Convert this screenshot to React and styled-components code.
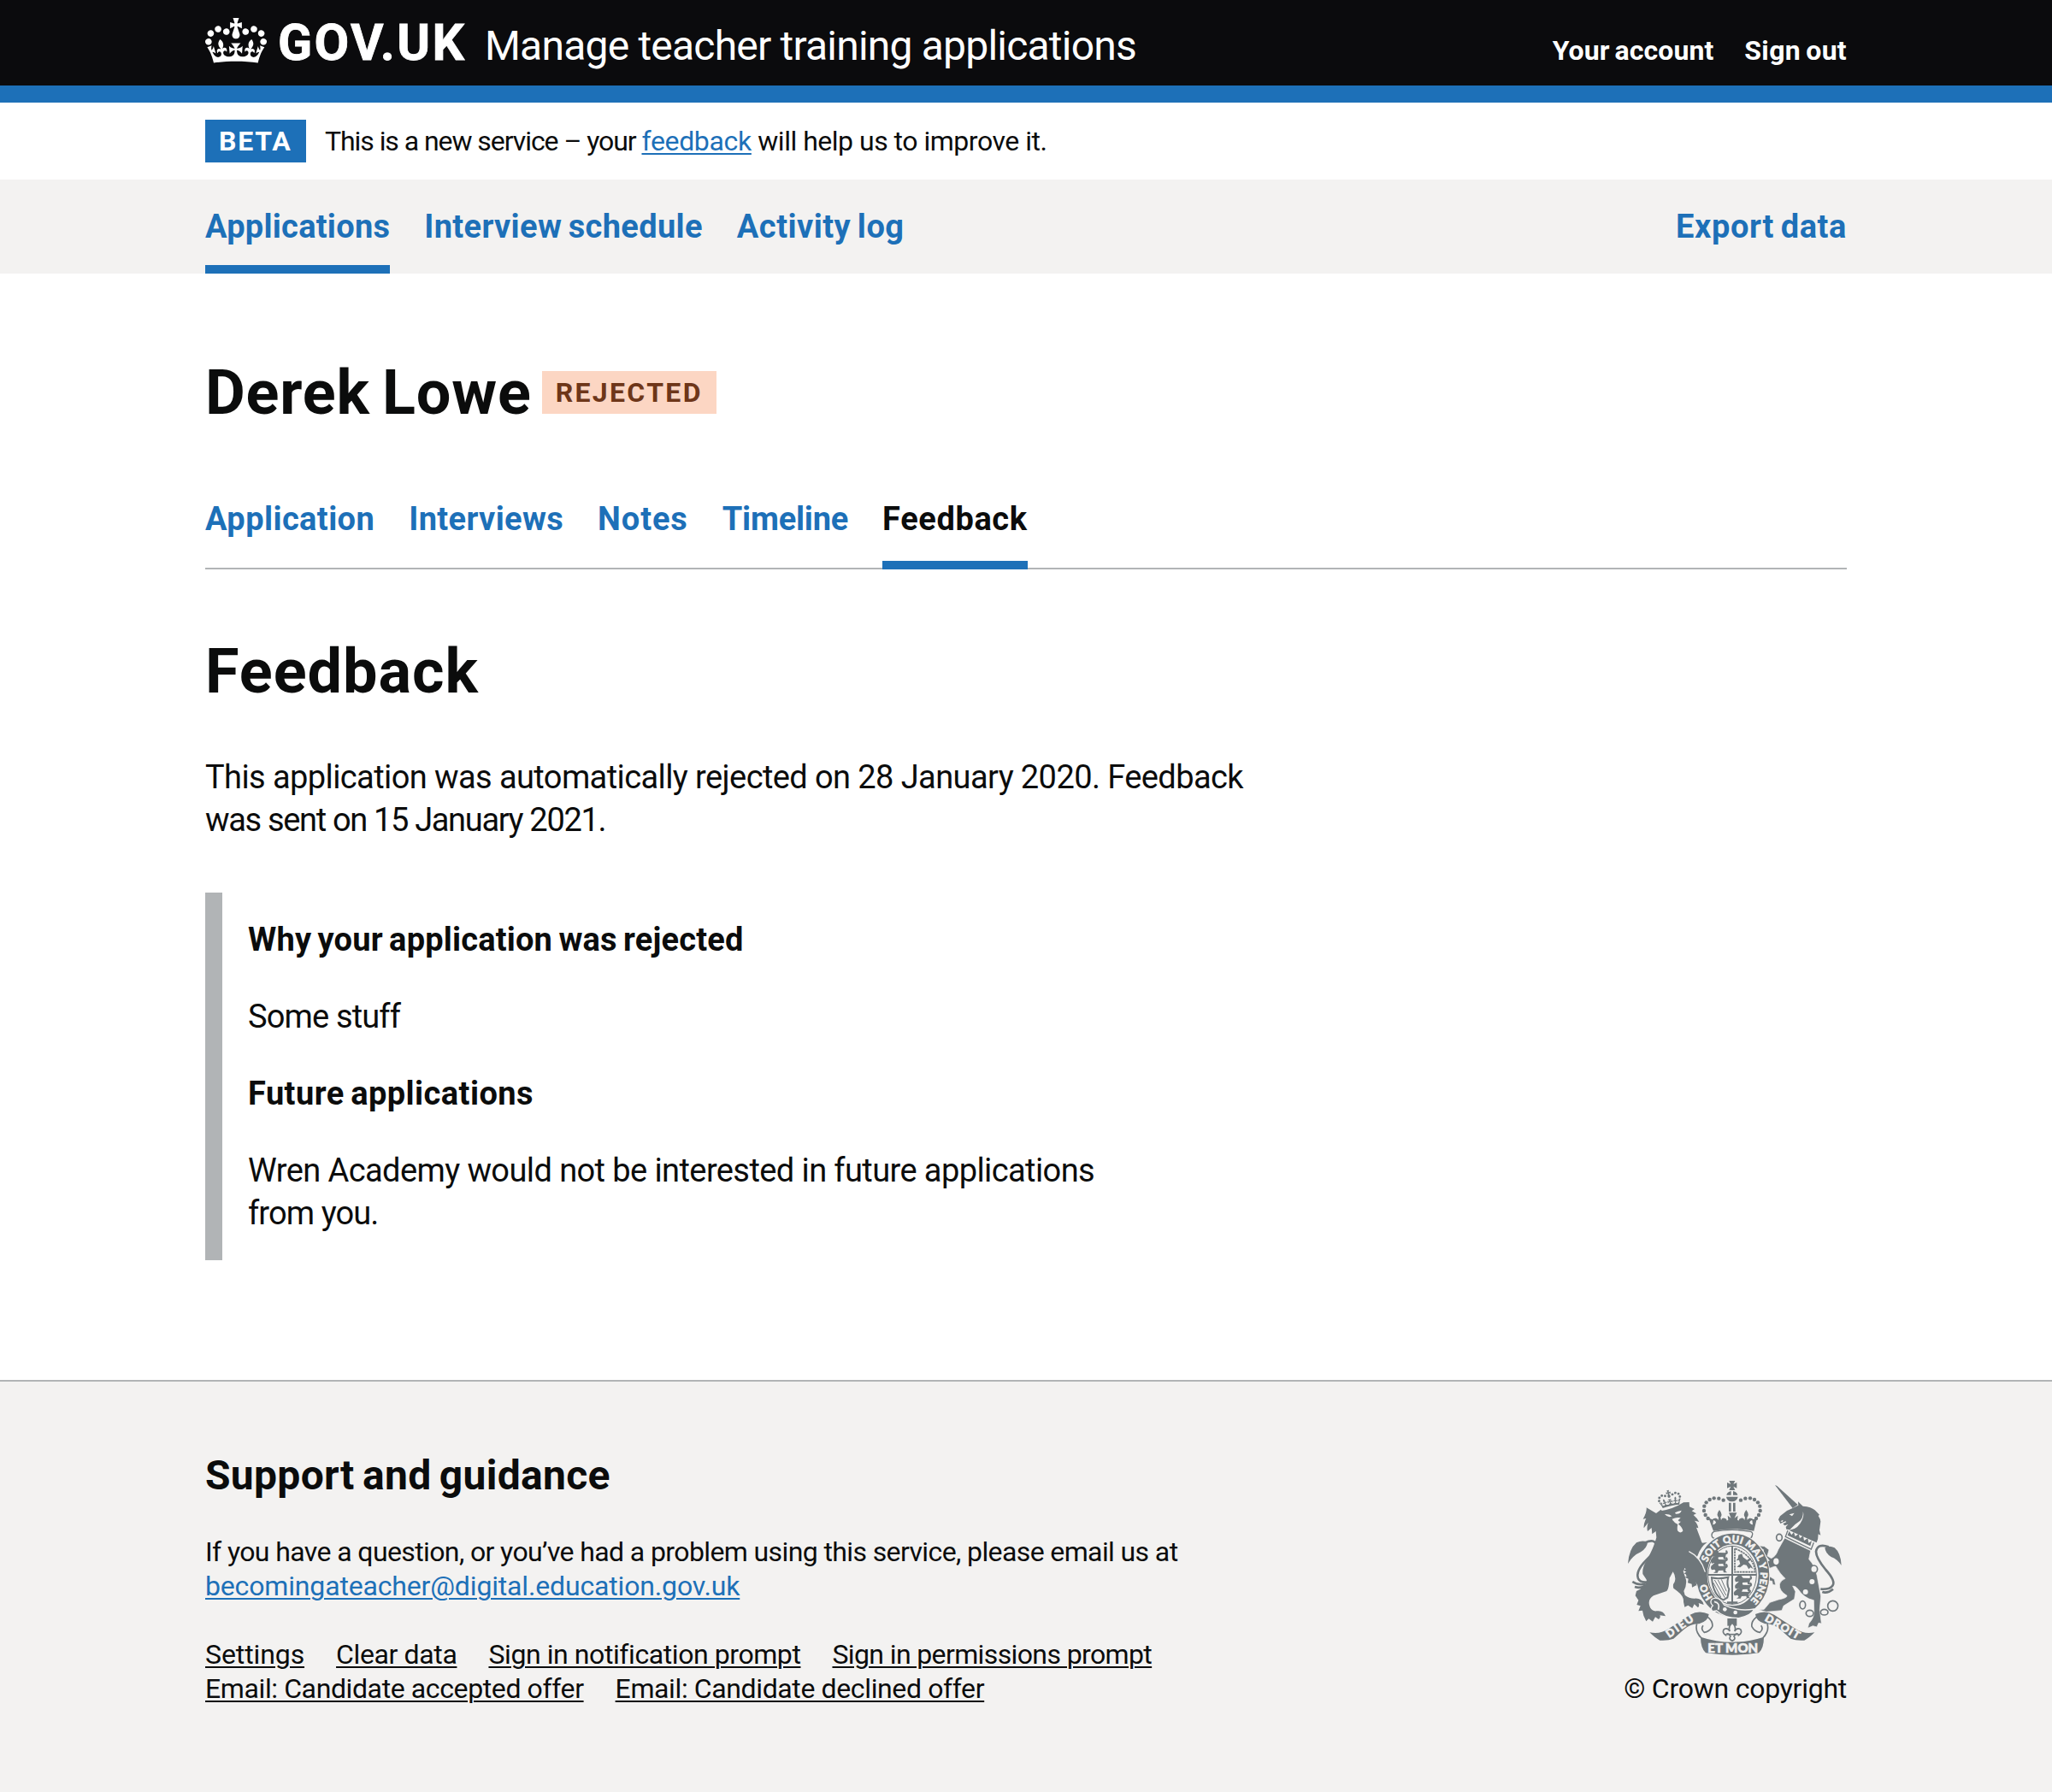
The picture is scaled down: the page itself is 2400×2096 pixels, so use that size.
import React from "react";
import styled, { createGlobalStyle, css } from "styled-components";

const ink = "#0b0c0c";
const brand = "#1d70b8";
const paper = "#f3f2f1";
const line = "#b1b4b6";
const heraldry = "#6f777b";

const GlobalStyle = createGlobalStyle`
  * { box-sizing: border-box; }
  body {
    margin: 0;
    background: #fff;
    color: ${ink};
    font-family: Roboto, "Liberation Sans", Arial, sans-serif;
  }
  h1, h2, p, ul { margin: 0; padding: 0; list-style: none; }
`;

const tracked = css`
  letter-spacing: ${(p) => p.$ls || 0}px;
`;
const bold = css`
  font-weight: 700;
  word-spacing: -0.06em;
`;

const Container = styled.div`
  width: 1920px;
  margin: 0 auto;
  display: flex;
`;

/* Header */
const Header = styled.header`
  height: 120px;
  background: #0b0b0d;
  border-bottom: 20px solid ${brand};
  color: #fff;
`;
const Logo = styled.a`
  display: flex;
  align-items: flex-start;
  width: 327px;
`;
const Crown = styled.svg`
  display: block;
  width: 72px;
  height: 53px;
  margin: 21px 13px 0 0;
`;
const LogoText = styled.span`
  margin-top: 19px;
  font-size: 59px;
  line-height: 61px;
  -webkit-text-stroke: 0.8px #fff;
  ${bold}
  ${tracked}
`;
const Product = styled.span`
  margin-top: 23px;
  font-size: 48px;
  line-height: 61px;
  white-space: nowrap;
  ${tracked}
`;
const AccountNav = styled.nav`
  display: flex;
  gap: 36px;
  margin: 39px 0 0 auto;
`;
const AccountLink = styled.a`
  font-size: 32px;
  line-height: 40px;
  ${bold}
  ${tracked}
`;

/* Phase banner */
const Phase = styled.div`
  padding: 20px 0;
`;
const Tag = styled.strong`
  display: block;
  height: 50px;
  width: ${(p) => p.$w}px;
  padding-left: 16px;
  font-size: 32px;
  line-height: 50px;
  text-transform: uppercase;
  color: ${(p) => p.$fg};
  background: ${(p) => p.$bg};
  ${bold}
  ${tracked}
`;
const PhaseText = styled.p`
  margin-left: 22px;
  font-size: 32px;
  line-height: 50px;
  white-space: pre;
`;
const Span = styled.span`
  ${tracked}
`;
const Link = styled.a`
  color: ${(p) => (p.$plain ? ink : brand)};
  text-decoration: underline;
  text-decoration-thickness: 2px;
  text-underline-offset: 3px;
  ${tracked}
`;

/* Primary navigation */
const Primary = styled.nav`
  height: 110px;
  background: ${paper};
`;
const NavItem = styled.a`
  height: 110px;
  padding-top: 30px;
  margin-right: ${(p) => (p.$end ? 0 : 40)}px;
  margin-left: ${(p) => (p.$end ? "auto" : 0)};
  border-bottom: 10px solid ${(p) => (p.$on ? brand : "transparent")};
  color: ${brand};
  font-size: 38px;
  line-height: 50px;
  ${bold}
  ${tracked}
`;

/* Main */
const Main = styled.main`
  width: 1920px;
  margin: 0 auto;
  padding: 99px 0 140px;
`;
const TitleRow = styled.div`
  display: flex;
  align-items: flex-start;
  gap: 12px;
  ${Tag} {
    margin-top: 15px;
  }
`;
const Title = styled.h1`
  font-size: 72px;
  line-height: 81px;
  ${bold}
  ${tracked}
`;
const Tabs = styled.nav`
  display: flex;
  gap: 40px;
  margin-top: 82px;
  box-shadow: inset 0 -2px 0 ${line};
`;
const Tab = styled.a`
  padding-bottom: 24px;
  border-bottom: 10px solid ${(p) => (p.$on ? brand : "transparent")};
  color: ${(p) => (p.$on ? ink : brand)};
  font-size: 38px;
  line-height: 50px;
  ${bold}
  ${tracked}
`;
const SectionTitle = styled(Title).attrs({ as: "h2" })`
  margin: 79px 0 58px;
`;
const Body = styled.p`
  font-size: 38px;
  line-height: 50px;
  ${(p) => p.$strong && bold}
  ${tracked}
`;
const Row = styled.span`
  display: block;
  white-space: nowrap;
  ${tracked}
`;
const Inset = styled.div`
  display: flex;
  flex-direction: column;
  gap: 40px;
  margin-top: 60px;
  padding: 30px;
  border-left: 20px solid ${line};
`;

/* Footer */
const Footer = styled.footer`
  border-top: 2px solid ${line};
  background: ${paper};
  padding: 79px 0 101px;
  ${Container} {
    justify-content: space-between;
    align-items: flex-end;
  }
`;
const FooterTitle = styled.h2`
  font-size: 48px;
  line-height: 61px;
  ${bold}
  ${tracked}
`;
const FooterText = styled.p`
  margin: 39px 0 40px;
  font-size: 32px;
  line-height: 40px;
`;
const FooterLinks = styled.ul`
  display: flex;
  gap: 37px;
  font-size: 32px;
  line-height: 40px;
`;
const Copyright = styled.div`
  font-size: 32px;
  line-height: 40px;
  text-align: right;
  ${tracked}
`;
const Crest = styled.svg`
  display: block;
  width: 260px;
  height: 210px;
  margin: 0 0 15px auto;
`;

const crownPath =
  "M25 30.2c3.5 1.5 7.7-.2 9.1-3.7 1.5-3.6-.2-7.8-3.9-9.2-3.6-1.4-7.6.3-9.1 3.9-1.4 3.5.3 7.5 3.9 9zM9 39.5c3.6 1.5 7.8-.2 9.2-3.7 1.5-3.6-.2-7.8-3.9-9.1-3.6-1.5-7.6.2-9.1 3.8-1.4 3.5.3 7.5 3.8 9zM4.4 57.2c3.5 1.5 7.7-.2 9.1-3.8 1.5-3.6-.2-7.7-3.9-9.1-3.5-1.5-7.6.3-9.1 3.8-1.4 3.5.3 7.6 3.9 9.1zm38.3-21.4c3.5 1.5 7.7-.2 9.1-3.8 1.5-3.6-.2-7.7-3.9-9.1-3.6-1.5-7.6.3-9.1 3.8-1.3 3.6.4 7.7 3.9 9.1zm64.4-5.6c-3.6 1.5-7.8-.2-9.1-3.7-1.5-3.6.2-7.8 3.8-9.2 3.6-1.4 7.7.3 9.2 3.9 1.3 3.5-.4 7.5-3.9 9zm15.9 9.3c-3.6 1.5-7.7-.2-9.1-3.7-1.5-3.6.2-7.8 3.7-9.1 3.6-1.5 7.7.2 9.2 3.8 1.5 3.5-.3 7.5-3.8 9zm4.7 17.7c-3.6 1.5-7.8-.2-9.2-3.8-1.5-3.6.2-7.7 3.9-9.1 3.6-1.5 7.7.3 9.2 3.8 1.3 3.5-.4 7.6-3.9 9.1zM89.3 35.8c-3.6 1.5-7.8-.2-9.2-3.8-1.4-3.6.2-7.7 3.9-9.1 3.6-1.5 7.7.3 9.2 3.8 1.4 3.6-.3 7.7-3.9 9.1zM69.7 17.7l8.9 4.7V9.3l-8.9 2.8c-.2-.3-.5-.6-.9-.9L72.4 0H59.6l3.5 11.2c-.3.3-.6.5-.9.9l-8.8-2.8v13.1l8.8-4.7c.3.3.6.7.9.9l-5 15.4v.1c-.2.8-.4 1.6-.4 2.4 0 4.1 3.1 7.5 7 8.1h.2c.3 0 .7.1 1 .1.4 0 .7 0 1-.1h.2c4-.6 7.1-4.1 7.1-8.1 0-.8-.1-1.7-.4-2.4V34l-5.1-15.4c.4-.2.7-.6 1-.9zM66 92.8c16.9 0 32.8 1.1 47.1 3.2 4-16.9 8.9-26.7 14-33.5l-9.6-3.4c1 4.9 1.1 7.2 0 10.2-1.5-1.4-3-4.3-4.2-8.7L108.6 76c2.8-2 5-3.2 7.5-3.3-4.4 9.4-10 11.9-13.6 11.2-4.3-.8-6.3-4.6-5.6-7.9 1-4.7 5.7-5.9 8-.5 4.3-8.7-3-11.4-7.6-8.8 7.1-7.2 7.9-13.5 2.1-21.1-8 6.1-8.1 12.3-4.5 20.8-4.7-5.4-12.1-2.5-9.5 6.2 3.4-5.2 7.9-2 7.2 3.1-.6 4.3-6.4 7.8-13.5 7.2-10.3-.9-10.9-8-11.2-13.8 2.5-.5 7.1 1.8 11 7.3L80.2 60c-4.1 4.4-8 5.3-12.3 5.4 1.4-4.4 8-11.6 8-11.6H55.5s6.4 7.2 7.9 11.6c-4.2-.1-8-1-12.3-5.4l1.4 16.4c3.9-5.5 8.5-7.7 10.9-7.3-.3 5.8-.9 12.8-11.1 13.8-7.2.6-12.9-2.9-13.5-7.2-.7-5 3.8-8.3 7.1-3.1 2.7-8.7-4.6-11.6-9.4-6.2 3.7-8.5 3.6-14.7-4.6-20.8-5.8 7.6-5 13.9 2.2 21.1-4.7-2.6-11.9.1-7.7 8.8 2.3-5.5 7.1-4.2 8.1.5.7 3.3-1.3 7.1-5.7 7.9-3.5.7-9-1.8-13.5-11.2 2.5.1 4.7 1.3 7.5 3.3l-4.7-15.4c-1.2 4.4-2.7 7.2-4.3 8.7-1.1-3-.9-5.3 0-10.2l-9.5 3.4c5 6.9 9.9 16.7 14 33.5 14.8-2.1 30.8-3.2 47.7-3.2z";

const pearls = [
  [377, 134], [361, 128], [344, 127], [329, 132], [317, 142], [310, 155], [309, 171], [314, 186], [323, 198],
];

const Passant = ({ y, x = 0 }) => (
  <path
    d="M334 314q-4 8 2 14l10-2 4 6-8 6h14l4-8 16-1 2 8h12l-6-6 2-10q8-2 6-10t-8-4q4 6-1 8l-22-1-6-8-8-4z"
    transform={`translate(${x} ${y})`}
  />
);

function RoyalArms() {
  return (
    <Crest viewBox="30 60 780 630" fill={heraldry} aria-hidden="true">
      <defs>
        <path id="garter" d="M410 512A97 115 0 0 1 410 282A97 115 0 0 1 410 512" />
      </defs>

      {/* crown above the shield */}
      <path d="M397 66h21l-6 12 12-6v20l-12-6 6 13h-21l6-13-13 6V72l13 6zM404 102v14h-16q2-10 16-14zM411 102q14 4 16 14h-16zM387 122h41q-3 16-21 17-18-1-20-17z" />
      <path d="M396 143h8v31h-8zM411 143h8v31h-8z" />
      {pearls.map(([x, y]) => (
        <g key={x}>
          <circle cx={x} cy={y} r="6.6" />
          <circle cx={815 - x} cy={y} r="6.6" />
        </g>
      ))}
      <path d="M325 196l17 8-2 16q10-1 11-9-6-10-14-6 2-9 14-8 7 2 8 7l1-10q-10-9 3-26 13 17 4 26l2 10q3-9 12-7 9 2 8 9l5-3-2-15 12 9-8-19h28l-8 19 12-9-2 15 5 3q-1-7 8-9 9-2 12 7l2-10q-9-9 4-26 13 17 3 26l1 10q1-5 8-7 12-1 14 8-8-4-14 6 1 8 11 9l-2-16 17-8-11 46q-66-13-142 0z" />
      <path d="M344 244q63-12 128 0 10 3 6 14-2 10-12 12H350q-13-2-14-13 0-9 8-13z" fill={paper} stroke={heraldry} strokeWidth="4" />

      {/* lion */}
      <g transform="translate(141 108) rotate(-12) scale(.63 .6)">
        <path d={crownPath} />
      </g>
      <path d="M141 180l17-13 3 4q40-6 76-29l20-1 1 16 18 8-10 7 16 9-10 5q12 10 20 24l-16-4q12 14 13 26l-7-2 15 40q4 14 6 14l17-2q-22 14-34 48-16 14-3 46 12 18 34 60l-12-4-1 14-8-12-5 16-8-18-16 8-1-12-14-4 2-14-12-6 11-5-14-8 11-8-8-12q-4 8-6 12l10 30q3 20-8 40l4 14q14 12 34 12 26-2 32 22l-18-6q4 10-2 16l-13-12-7 14-15-10-12 6-4-18q2-20-22-38l-13-10q-4-12 4-22 6-18-6-36l-12 22q-2 40-10 46l-46 16q-24 14-12 42 8 14 22 12 24-4 32 18l-20-3q4 8-4 14l-12-8-9 16-14-10-9 9-9-20-4-18-14 2 7-18-13-4 6-16-11-16 4-16 12-6q30-24 22-36l-12-18q-2-24 12-44 28-50 36-84l-2-22-13 10-2-22-14 12q-4-14 2-30l-15 19q-2-14 8-34l-11 2q14-24 12-40z" />
      <path d="M171 183q16-1 25 7-12 8-25-7zM207 178q10-6 23-8-3 13-20 12zM197 200q16-8 30-4l-9 9q5 6 10 4-7 6-9 9 14 10 16 24-10 11-19-1-2-12 1-22-14-6-20-19z" fill={paper} />
      <path d="M42 357q4-52 30-74 22-10 39-1-2 20-24 34-28 12-45 41z" />
      <path d="M102 283q34-16 40 10 0 16-36 52-38 38-28 64 8 16 34 12M58 420q20 14 46 8M66 438q24 8 46-10" fill="none" stroke={heraldry} strokeWidth="8" />

      {/* unicorn */}
      <path d="M558 81l7 3 73 66-18 12z" />
      <path d="M620 162l20-10-1-13 17 16q30 2 42 14l16 16-4 4q8 12 8 20l-4 30 4 18-8-4q0 18-6 30l-96-43 6-2q30-6 42-42 4-12 0-22 2 20-10 32-20 12-36 32l-12-2-2-8 8-9-12 4-6-6 12-6-3-3-18 8-7-14 6-12 24-19z" />
      <path d="M608 184l18-5-8 11zM577 208l10-5-3 8z" fill={paper} />
      <path d="M603 240l-8 22 90 44 9-23" fill="none" stroke={heraldry} strokeWidth="4" />
      <path d="M602 257l6-14 8 13 8-10 5 15 12-9 4 16 12-9 3 17 13-8 3 16 11-7-5 18z" />
      <path d="M592 267l91 44-6 30q22 24 28 56l14 74-4 48 6 48-10-2-6 14-14-4-18 8 4-16q20-22 18-46l-1-36q-34-6-56-40-8-10-18-10l10 20-4 26-38 24-6 16-54 5-26-7 18-2 20-24 30-10q32-6 30-14-28-16-26-40 4-14 20-20-18-16-34-44l-24 9q-10 4-10 12l14 16 16 10 4 20-10-2-2-12-14-2-16-22-16-4 6-14-8-10 4-14 34-6-14-18-14 6 8-26-16-6-11 12-12-14 12-8 30 4 16 12-6 22 14 8q16-6 24-30z" stroke={paper} strokeWidth="2" />
      <path d="M791 363q-2-44-24-62-18-10-34 0 2 20 22 32 22 8 36 30z" />
      <path d="M746 298q-38-14-44 16 0 22 34 64 36 40 24 56-10 14-42 12M724 456q18 6 38-10" fill="none" stroke={heraldry} strokeWidth="8" />
      <g fill="none" stroke={heraldry} strokeWidth="5">
        <ellipse cx="573" cy="265" rx="10" ry="12" />
        <ellipse cx="562" cy="349" rx="12" ry="14" fill={paper} />
        <ellipse cx="695" cy="376" rx="12" ry="13" fill={paper} />
        <ellipse cx="655" cy="502" rx="10" ry="14" />
        <ellipse cx="680" cy="531" rx="13" ry="11" />
        <ellipse cx="731" cy="527" rx="13" ry="10" />
        <circle cx="761" cy="505" r="18" />
      </g>
      <circle cx="688" cy="420" r="9" fill={paper} />
      <circle cx="665" cy="456" r="9" fill={paper} />

      {/* garter and shield */}
      <ellipse cx="410" cy="397" rx="131" ry="150" fill={paper} />
      <ellipse cx="410" cy="397" rx="109" ry="127" fill="none" stroke={heraldry} strokeWidth="38" />
      <ellipse cx="408" cy="397" rx="85" ry="102" fill="none" stroke={heraldry} strokeWidth="3" />
      <path d="M405 295h6v204h-6zM323 393h170v6H323zM390 490h37v7h-37z" />
      <Passant y={4} />
      <Passant y={28} />
      <Passant y={51} />
      <Passant x={85} y={93} />
      <Passant x={85} y={117} />
      <Passant x={81} y={141} />
      <path d="M417 303v83h71q-2-54-71-83z" fill="none" stroke={heraldry} strokeWidth="5" strokeDasharray="8 2" />
      <path d="M430 326l12-4 4 12 14 10 8-6 8 4-12 8 10 12 8 14-10-6-6 6-8-14-10-2-12 10-12-2 12-10-4-14-10 2 6-8z" />
      <path d="M336 406q24 6 58-2-7 26 3 42l-6 30-14 8q-36-16-41-78z" fill="none" stroke={heraldry} strokeWidth="6" />
      <path d="M346 414l36 62M358 414l28 54M370 412l18 42M342 424l26 50" stroke={heraldry} strokeWidth="3" />
      <g fill={paper} stroke={paper} strokeWidth="1.6" fontFamily="Lato, sans-serif" fontWeight="900" fontSize="34">
        <text letterSpacing="0.9">
          <textPath href="#garter" startOffset="82">
            HO<tspan dx="74">SOIT QUI MAL Y PENSE</tspan>
          </textPath>
        </text>
      </g>
      <path d="M336 482q18-12 34 6l10 14q50 24 105 14-8 22-54 32-52 0-78-26l-14 2q-10-10 1-20-12-8-4-22z" stroke={paper} strokeWidth="4" />
      <path d="M345 490q22 4 14 28" fill="none" stroke={paper} strokeWidth="5" />
      <circle cx="382" cy="517" r="7" fill={paper} />
      <circle cx="419" cy="528" r="7" fill={paper} />

      {/* lion's forepaw over the garter */}
      <path d="M252 316q44 18 58 66l6 14-2 30-10-8-4 14-8-16-8 14-9-18-14 4-1-12-14-4 2-14-12-6 11-5-14-8z" />
      <path d="M256 314q42 20 57 72" fill="none" stroke={paper} strokeWidth="4" />

      {/* plant badge */}
      <path d="M391 549h33v26h-33z" />
      <path d="M408 564q16 16 8 30 8-14 21-7 8 12-7 21-2-8-10-4l-6 8q8 9-6 16-14-7-6-16l-6-8q-8-4-10 4-15-9-7-21 13-7 21 7-8-14 8-30z" fill={paper} stroke={heraldry} strokeWidth="5" />
      <path d="M390 605h36" stroke={heraldry} strokeWidth="5" />

      {/* motto scroll */}
      <path d="M118 598q36 8 66-12l76-50q32-18 66-2-2 24-34 34-28-2-54 20l-36 32q-20 8-48 6-16-8-36-28z" />
      <path d="M697 598q-36 8-66-12l-76-50q-32-18-66-2 2 24 34 34 28-2 54 20l36 32q20 8 48 6 16-8 36-28z" />
      <path d="M322 544q20 16 16 34-10 18-28 20-14-12-4-24M284 568q-8 26 16 50M493 544q-20 16-16 34 10 18 28 20 14-12 4-24M531 568q8 26-16 50" fill="none" stroke={heraldry} strokeWidth="5" />
      <path d="M297 614q110 36 222 0 0 40-18 56-92 14-186 0-18-18-18-56z" />
      <g fill={paper} stroke={paper} strokeWidth="1.8" fontFamily="Lato, sans-serif" fontWeight="900">
        <text transform="translate(187 618) rotate(-35)" fontSize="38" textLength="108">DIEU</text>
        <text transform="translate(520 556) rotate(30)" fontSize="38" textLength="134">DROIT</text>
        <text x="322" y="669" fontSize="45">ET MON</text>
      </g>
    </Crest>
  );
}

export default function App() {
  return (
    <>
      <GlobalStyle />
      <Header>
        <Container>
          <Logo>
            <Crown viewBox="0 0 132 97" fill="#fff" preserveAspectRatio="none">
              <path d={crownPath} />
            </Crown>
            <LogoText $ls={2.4}>GOV.UK</LogoText>
          </Logo>
          <Product $ls={-0.79}>Manage teacher training applications</Product>
          <AccountNav>
            <AccountLink $ls={0.08}>Your account</AccountLink>
            <AccountLink $ls={0.3}>Sign out</AccountLink>
          </AccountNav>
        </Container>
      </Header>

      <Phase>
        <Container>
          <Tag $w={118} $fg="#fff" $bg={brand} $ls={1.8}>Beta</Tag>
          <PhaseText>
            <Span $ls={-1.06}>{"This is a new service – your "}</Span>
            <Link $ls={-0.34}>feedback</Link>
            <Span $ls={-0.49}>{" will help us to improve it."}</Span>
          </PhaseText>
        </Container>
      </Phase>

      <Primary>
        <Container>
          <NavItem $on $ls={0.26}>Applications</NavItem>
          <NavItem $ls={0.35}>Interview schedule</NavItem>
          <NavItem $ls={0.48}>Activity log</NavItem>
          <NavItem $end $ls={0.6}>Export data</NavItem>
        </Container>
      </Primary>

      <Main>
        <TitleRow>
          <Title $ls={0.8}>Derek Lowe</Title>
          <Tag $w={204} $fg="#6e3619" $bg="#fcd6c3" $ls={2.33}>Rejected</Tag>
        </TitleRow>
        <Tabs>
          <Tab $ls={0.42}>Application</Tab>
          <Tab $ls={0.36}>Interviews</Tab>
          <Tab $ls={0.9}>Notes</Tab>
          <Tab $ls={-0.21}>Timeline</Tab>
          <Tab $on $ls={0.61}>Feedback</Tab>
        </Tabs>
        <SectionTitle $ls={1}>Feedback</SectionTitle>
        <Body>
          <Row $ls={-0.59}>This application was automatically rejected on 28 January 2020. Feedback</Row>
          <Row $ls={-1.33}>was sent on 15 January 2021.</Row>
        </Body>
        <Inset>
          <Body $strong $ls={0.18}>Why your application was rejected</Body>
          <Body $ls={-0.85}>Some stuff</Body>
          <Body $strong $ls={0.44}>Future applications</Body>
          <Body>
            <Row $ls={-0.59}>Wren Academy would not be interested in future applications</Row>
            <Row $ls={-0.9}>from you.</Row>
          </Body>
        </Inset>
      </Main>

      <Footer>
        <Container>
          <div>
            <FooterTitle $ls={0.3}>Support and guidance</FooterTitle>
            <FooterText>
              <Row $ls={-0.61}>If you have a question, or you’ve had a problem using this service, please email us at</Row>
              <Link $ls={-0.16}>becomingateacher@digital.education.gov.uk</Link>
            </FooterText>
            <FooterLinks>
              <li><Link $plain $ls={-0.1}>Settings</Link></li>
              <li><Link $plain $ls={-0.37}>Clear data</Link></li>
              <li><Link $plain $ls={-0.42}>Sign in notification prompt</Link></li>
              <li><Link $plain $ls={-0.62}>Sign in permissions prompt</Link></li>
            </FooterLinks>
            <FooterLinks>
              <li><Link $plain $ls={-0.39}>Email: Candidate accepted offer</Link></li>
              <li><Link $plain $ls={-0.38}>Email: Candidate declined offer</Link></li>
            </FooterLinks>
          </div>
          <div>
            <RoyalArms />
            <Copyright $ls={-0.25}>© Crown copyright</Copyright>
          </div>
        </Container>
      </Footer>
    </>
  );
}
